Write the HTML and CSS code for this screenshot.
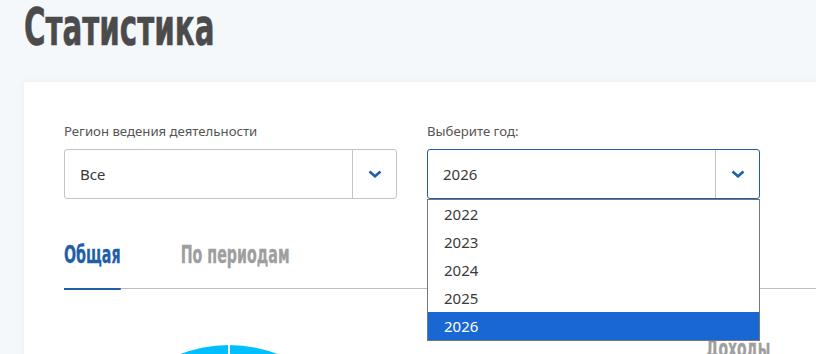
FILE: index.html
```html
<!DOCTYPE html>
<html lang="ru">
<head>
    <meta charset="UTF-8">
    <meta name="viewport" content="width=device-width, initial-scale=1.0">
    <title>Статистика</title>
    <link rel="stylesheet" href="styles.css">
</head>
<body>
    <div class="page">
        <h1 class="page-title"><span>Статистика</span></h1>

        <section class="card">
            <div class="filters">
                <div class="field">
                    <label class="field-label">Регион ведения деятельности</label>
                    <div class="select">
                        <span class="select-value">Все</span>
                        <span class="select-arrow">
                            <svg width="14" height="8" viewBox="0 0 14 8"><path d="M1.5 1.5 L7 6.3 L12.5 1.5" fill="none" stroke="#1f5fa8" stroke-width="2.6"/></svg>
                        </span>
                    </div>
                </div>
                <div class="field">
                    <label class="field-label">Выберите год:</label>
                    <div class="select select--open">
                        <span class="select-value">2026</span>
                        <span class="select-arrow">
                            <svg width="14" height="8" viewBox="0 0 14 8"><path d="M1.5 1.5 L7 6.3 L12.5 1.5" fill="none" stroke="#1f5fa8" stroke-width="2.6"/></svg>
                        </span>
                        <ul class="select-options">
                            <li>2022</li>
                            <li>2023</li>
                            <li>2024</li>
                            <li>2025</li>
                            <li class="selected">2026</li>
                        </ul>
                    </div>
                </div>
            </div>

            <div class="tabs">
                <div class="tab-list">
                    <div class="tab tab--active">Общая</div>
                    <div class="tab">По периодам</div>
                </div>
            </div>

            <div class="chart">
                <div class="pie"></div>
                <div class="legend">
                    <div class="legend-title">Доходы</div>
                </div>
            </div>
        </section>
    </div>
</body>
</html>
```

FILE: styles.css
```css
:root {
    --bg: #f4f8fb;
    --text: #3a3a3a;
    --title: #4b4b4b;
    --label: #555555;
    --blue: #1f5fa8;
    --muted: #9e9e9e;
    --border: #c4c4c4;
    --highlight: #1967d2;
    --cyan: #00bfff;
}

* {
    margin: 0;
    padding: 0;
    box-sizing: border-box;
}

body {
    background-color: var(--bg);
    font-family: "Noto Sans", "Open Sans", sans-serif;
    color: var(--text);
    overflow: hidden;
}

.page {
    padding-left: 24px;
}

/* condensed headings: DejaVu Sans Condensed squeezed further */
.page-title,
.tab,
.legend-title {
    font-family: "DejaVu Sans Condensed", "DejaVu Sans", sans-serif;
    font-weight: bold;
}

.page-title {
    font-size: 52px;
    line-height: 54px;
    color: var(--title);
}

.page-title span {
    display: inline-block;
    transform: scaleX(0.627);
    transform-origin: left;
    -webkit-text-stroke: 0.6px var(--title);
}

.card {
    margin-top: 28px;
    margin-right: -200px;
    padding: 40px 40px 0;
    height: 400px;
    background: #fff;
    box-shadow: 0 0 8px rgba(0, 0, 0, 0.05);
}

.filters {
    display: grid;
    grid-template-columns: 333px 333px;
    gap: 30px;
    margin-bottom: 41px;
}

.field-label {
    display: block;
    font-size: 13.2px;
    line-height: 18px;
    color: var(--label);
    margin-bottom: 9px;
}

.select {
    position: relative;
    display: flex;
    height: 50px;
    border: 1px solid var(--border);
    border-radius: 3px;
    background: #fff;
}

.select--open {
    border-color: var(--blue);
}

.select-value {
    flex: 1;
    display: flex;
    align-items: center;
    padding-left: 15px;
    font-size: 15px;
}

.select-arrow {
    width: 44px;
    display: flex;
    align-items: center;
    justify-content: center;
    border-left: 1px solid var(--border);
}

.select-arrow svg {
    display: block;
}

.select-options {
    position: absolute;
    top: calc(100% + 1px);
    left: -1px;
    right: -1px;
    list-style: none;
    background: #fff;
    border: 1px solid #767676;
    z-index: 2;
}

.select-options li {
    height: 28px;
    line-height: 28px;
    padding-left: 16px;
    font-size: 15px;
}

.select-options .selected {
    background: var(--highlight);
    color: #fff;
}

.tabs {
    border-bottom: 1px solid #bdbdbd;
}

.tab-list {
    display: flex;
    gap: 91px;
    transform: scaleX(0.66);
    transform-origin: left;
}

.tab {
    position: relative;
    font-size: 24px;
    line-height: 30px;
    padding-bottom: 18px;
    color: var(--muted);
    -webkit-text-stroke: 0.3px var(--muted);
}

.tab--active {
    color: var(--blue);
    -webkit-text-stroke-color: var(--blue);
}

.tab--active::after {
    content: "";
    position: absolute;
    left: 0;
    right: 0;
    bottom: -2px;
    height: 2px;
    background: var(--blue);
}

.chart {
    display: flex;
    align-items: flex-start;
}

.pie {
    position: relative;
    width: 276px;
    height: 276px;
    margin: 56px 0 0 27px;
    border-radius: 50%;
    background: var(--cyan);
}

.pie::after {
    content: "";
    position: absolute;
    left: 137px;
    top: 0;
    width: 2px;
    height: 138px;
    background: #fff;
}

.legend {
    margin: 45px 0 0 339px;
}

.legend-title {
    font-size: 24px;
    line-height: 30px;
    color: var(--muted);
    -webkit-text-stroke: 0.3px var(--muted);
    transform: scaleX(0.645);
    transform-origin: left;
}
```
